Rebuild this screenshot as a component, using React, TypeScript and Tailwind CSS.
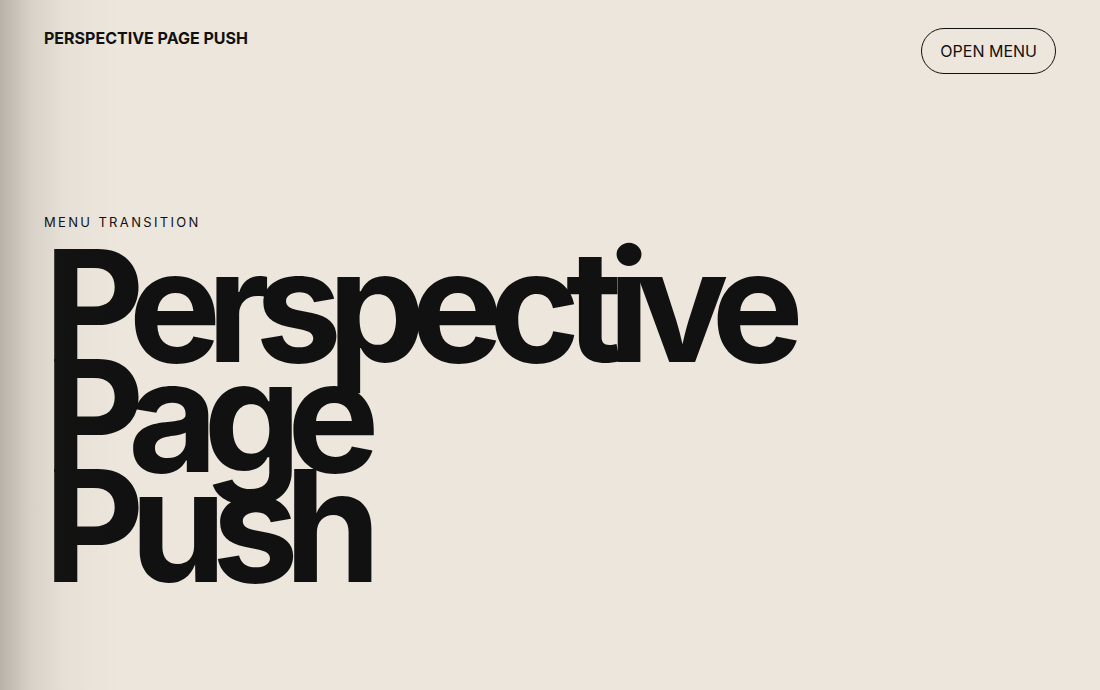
export default function App() {
	return (
		<div className="relative min-h-[690px] w-full overflow-hidden bg-[#ede6dc] font-['Inter','Liberation_Sans',sans-serif] text-[#111111]">
			<div className="pointer-events-none absolute inset-y-0 left-0 w-[120px] bg-[linear-gradient(to_right,rgba(60,55,45,0.3)_0%,rgba(60,55,45,0.12)_25%,rgba(60,55,45,0.03)_55%,rgba(60,55,45,0)_100%)]" />

			<header className="flex items-start justify-between px-11 pt-7">
				<p className="text-base font-bold leading-5">PERSPECTIVE PAGE PUSH</p>
				<button
					type="button"
					className="h-[46px] rounded-full border border-[#111111] px-[18px] text-base leading-none text-[#111111]"
				>
					OPEN MENU
				</button>
			</header>

			<main className="px-11 pt-[140px]">
				<p className="text-[13px] font-normal leading-4 tracking-[0.18em]">
					MENU TRANSITION
				</p>
				<h1 className="mt-[21px] text-[155px] font-bold leading-[0.71] tracking-[-0.093em]">
					Perspective
					<br />
					Page
					<br />
					Push
				</h1>
			</main>
		</div>
	);
}
